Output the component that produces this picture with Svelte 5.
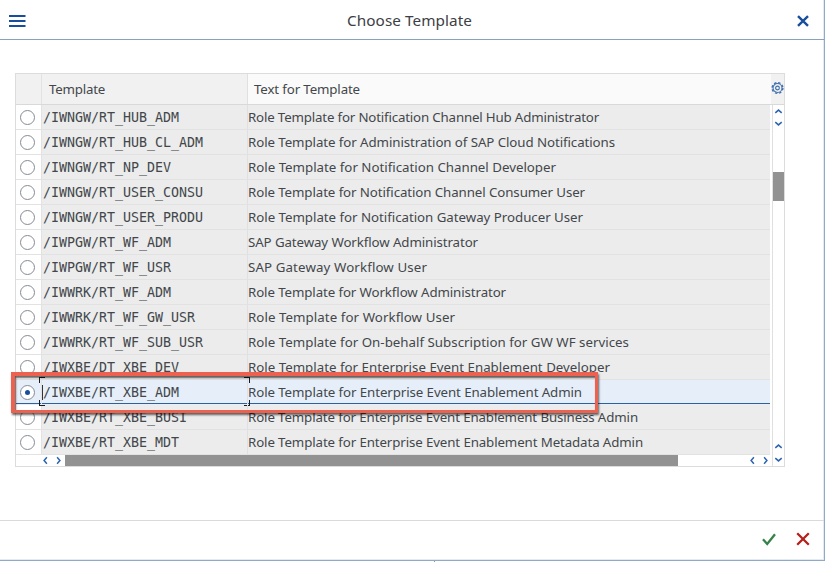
<script>
  const rows = [
    ['/IWNGW/RT_HUB_ADM', 'Role Template for Notification Channel Hub Administrator', 351],
    ['/IWNGW/RT_HUB_CL_ADM', 'Role Template for Administration of SAP Cloud Notifications', 367],
    ['/IWNGW/RT_NP_DEV', 'Role Template for Notification Channel Developer', 308],
    ['/IWNGW/RT_USER_CONSU', 'Role Template for Notification Channel Consumer User', 337],
    ['/IWNGW/RT_USER_PRODU', 'Role Template for Notification Gateway Producer User', 335],
    ['/IWPGW/RT_WF_ADM', 'SAP Gateway Workflow Administrator', 230],
    ['/IWPGW/RT_WF_USR', 'SAP Gateway Workflow User', 179],
    ['/IWWRK/RT_WF_ADM', 'Role Template for Workflow Administrator', 258],
    ['/IWWRK/RT_WF_GW_USR', 'Role Template for Workflow User', 207],
    ['/IWWRK/RT_WF_SUB_USR', 'Role Template for On-behalf Subscription for GW WF services', 381],
    ['/IWXBE/DT_XBE_DEV', 'Role Template for Enterprise Event Enablement Developer', 362],
    ['/IWXBE/RT_XBE_ADM', 'Role Template for Enterprise Event Enablement Admin', 334],
    ['/IWXBE/RT_XBE_BUSI', 'Role Template for Enterprise Event Enablement Business Admin', 390],
    ['/IWXBE/RT_XBE_MDT', 'Role Template for Enterprise Event Enablement Metadata Admin', 395]
  ];
  let selected = $state(11);

  // Spread the letters so that a label spans the given width.
  function fit(node, width) {
    const natural = node.getBoundingClientRect().width;
    node.style.letterSpacing = (width - natural) / node.textContent.length + 'px';
  }
</script>

{#snippet arrow(dir)}
  <svg class="arrow {dir}" width="9" height="9" viewBox="0 0 9 9"><path d="M1.3 5.9 4.5 3.1 7.7 5.9" /></svg>
{/snippet}

<div class="page">
  <div class="dialog">
    <header>
      <svg class="menu" width="17" height="14" viewBox="0 0 17 14"><path d="M0 2h16.5M0 7h16.5M0 12h16.5" /></svg>
      <h1><span use:fit={125}>Choose Template</span></h1>
      <svg class="close" width="12" height="12" viewBox="0 0 12 12"><path d="M1 1.2 11 10.8M11 1.2 1 10.8" /></svg>
    </header>

    <main>
      <div class="table">
        <div class="head">
          <div class="pick"></div>
          <div class="name"><span use:fit={56}>Template</span></div>
          <div class="text"><span use:fit={106}>Text for Template</span></div>
          <div class="gear">
            <svg width="13" height="14" viewBox="0 0 14 14">
              <circle cx="7" cy="7" r="5.8" stroke-width="1.5" stroke-dasharray="2.6 1.96" />
              <circle cx="7" cy="7" r="4.8" stroke-width="1.1" />
              <circle cx="7" cy="7" r="2" stroke-width="1.2" />
            </svg>
          </div>
        </div>
        <div class="content">
          <div class="left">
            {#each rows as [name, text, width], i}
              <div class="row" class:selected={i === selected}>
                <div class="pick"><button class="radio" aria-label={name} onclick={() => (selected = i)}></button></div>
                <div class="name">
                  <span>{name}</span>
                  {#if i === selected}
                    <i class="caret"></i><i class="corner tl"></i><i class="corner tr"></i><i class="corner bl"></i><i class="corner br"></i>
                  {/if}
                </div>
                <div class="text"><span use:fit={width}>{text}</span></div>
              </div>
            {/each}
            <div class="hscroll">
              <div class="pair">{@render arrow('l')}{@render arrow('r')}</div>
              <div class="hthumb"></div>
              <div class="pair end">{@render arrow('l')}{@render arrow('r')}</div>
            </div>
          </div>
          <div class="vscroll">
            <div class="vpair">{@render arrow('u')}{@render arrow('d')}</div>
            <div class="vthumb"></div>
            <div class="vpair bottom">{@render arrow('u')}{@render arrow('d')}</div>
          </div>
        </div>
        <div class="highlight"></div>
      </div>
    </main>

    <footer>
      <svg width="14" height="13" viewBox="0 0 14 13"><path d="M1 6.3 5.2 11 13 1.2" stroke="#36824b" /></svg>
      <svg width="14" height="14" viewBox="0 0 14 14"><path d="M1.2 1.2 12.8 12.8M12.8 1.2 1.2 12.8" stroke="#b5201b" /></svg>
    </footer>
  </div>
  <div class="tick"></div>
</div>

<style>
  :global(body) { margin: 0; overflow: hidden; }
  .page { width: 826px; height: 562px; overflow: hidden; background: #fff; font: 13.3px/24px 'Noto Sans', sans-serif; color: #43474b; }
  .page * { box-sizing: border-box; }
  .dialog { width: 825px; height: 561px; display: flex; flex-direction: column; border-right: 1px solid #91a9c7; border-bottom: 1px solid #91a9c7; box-shadow: inset -1px -1px #e3eaf2; background: #fff; }
  .tick { width: 1px; height: 1px; margin-left: 434px; background: #8a97a5; }
  header { height: 40px; flex: none; display: flex; align-items: center; padding: 2px 15px 0 9px; border-bottom: 1px solid #89a1bd; }
  h1 { flex: 1; margin: 0 0 0 -4px; text-align: center; font-size: 15.3px; font-weight: 400; line-height: 22px; padding-bottom: 1px; color: #3c4045; }
  svg { display: block; flex: none; fill: none; }
  .menu { stroke: #174f9d; stroke-width: 2; }
  .close { stroke: #174f9d; stroke-width: 2.4; }
  main { flex: 1; padding: 33px 0 0 15px; }
  .table { position: relative; width: 770px; height: 394px; border: 1px solid #dcdcdc; display: flex; flex-direction: column; }
  .head { height: 31px; flex: none; display: flex; line-height: 30px; background: #f1f1f1; border-bottom: 1px solid #d9d9d9; }
  .pick { width: 26px; flex: none; display: flex; align-items: center; justify-content: center; border-right: 1px solid #e2e2e2; }
  .name { width: 206px; flex: none; border-right: 1px solid #e0e0e0; white-space: pre; position: relative; }
  .text { flex: 1; white-space: pre; }
  .head .name { padding-left: 7px; }
  .head .text { padding-left: 6px; background: #fafafa; }
  .head span, .text span, h1 span { display: inline-block; }
  .gear { width: 13px; flex: none; display: flex; align-items: center; justify-content: center; stroke: #3d6eae; padding-bottom: 3px; }
  .content { flex: 1; display: flex; }
  .left { width: 754px; display: flex; flex-direction: column; }
  .row { height: 25px; flex: none; display: flex; background: #ececec; border-bottom: 1px solid #e2e2e2; }
  .row .pick { background: #fff; padding-right: 2px; }
  .row .name { font: 13.3px/26px 'DejaVu Sans Mono', monospace; height: 24px; padding-left: 1px; }
  .radio { width: 15px; height: 15px; padding: 0; border: 1px solid #858b94; border-radius: 50%; background: #fff; display: flex; align-items: center; justify-content: center; }
  .selected { background: #e6eff9; border-bottom-color: #e6eff9; box-shadow: inset 0 -1px #2e5f9f; }
  .selected .pick { background: none; }
  .selected .radio::after { content: ''; width: 5px; height: 5px; border-radius: 50%; background: #174f9d; }
  .caret { position: absolute; left: 0; top: 5px; width: 1px; height: 15px; background: #333; }
  .corner { position: absolute; width: 6px; height: 6px; border: 0 solid #17191c; }
  .tl { left: -3px; top: -3px; border-width: 1px 0 0 1px; }
  .tr { right: -3px; top: -3px; border-width: 1px 1px 0 0; }
  .bl { left: -3px; bottom: -2px; border-width: 0 0 1px 1px; }
  .br { right: -3px; bottom: -2px; border-width: 0 1px 1px 0; }
  .hscroll { height: 11px; display: flex; align-items: center; background: #fff; }
  .pair { width: 49px; height: 11px; flex: none; display: flex; align-items: center; gap: 4px; padding-left: 25px; }
  .hthumb { width: 613px; height: 11px; background: #929292; }
  .pair.end { width: 92px; padding-left: 70px; }
  .vscroll { margin-left: 2px; width: 12px; border-left: 1px solid #e0e0e0; display: flex; flex-direction: column; align-items: stretch; }
  .vpair { height: 67px; flex: none; display: flex; flex-direction: column; align-items: center; gap: 3px; padding: 2px 1px 0 0; }
  .vthumb { height: 29px; background: #929292; }
  .vpair.bottom { height: 24px; margin-top: auto; padding: 0 1px 0 0; gap: 4px; }
  .arrow { stroke: #2b64b0; stroke-width: 1.5; }
  .d { transform: rotate(180deg); }
  .l { transform: rotate(-90deg); }
  .r { transform: rotate(90deg); }
  .highlight { position: absolute; left: -5px; top: 298px; width: 587px; height: 41px; border: 4px solid #ed6150; border-width: 4px 3px 3px 4px; box-shadow: 1px 2px 2px rgba(0, 0, 0, .6), inset 1px 2px 2px rgba(0, 0, 0, .6); pointer-events: none; }
  footer { height: 40px; flex: none; display: flex; align-items: center; justify-content: flex-end; gap: 20px; padding: 0 14px 3px 0; border-top: 1px solid #dadada; stroke-width: 2.3; }
</style>
